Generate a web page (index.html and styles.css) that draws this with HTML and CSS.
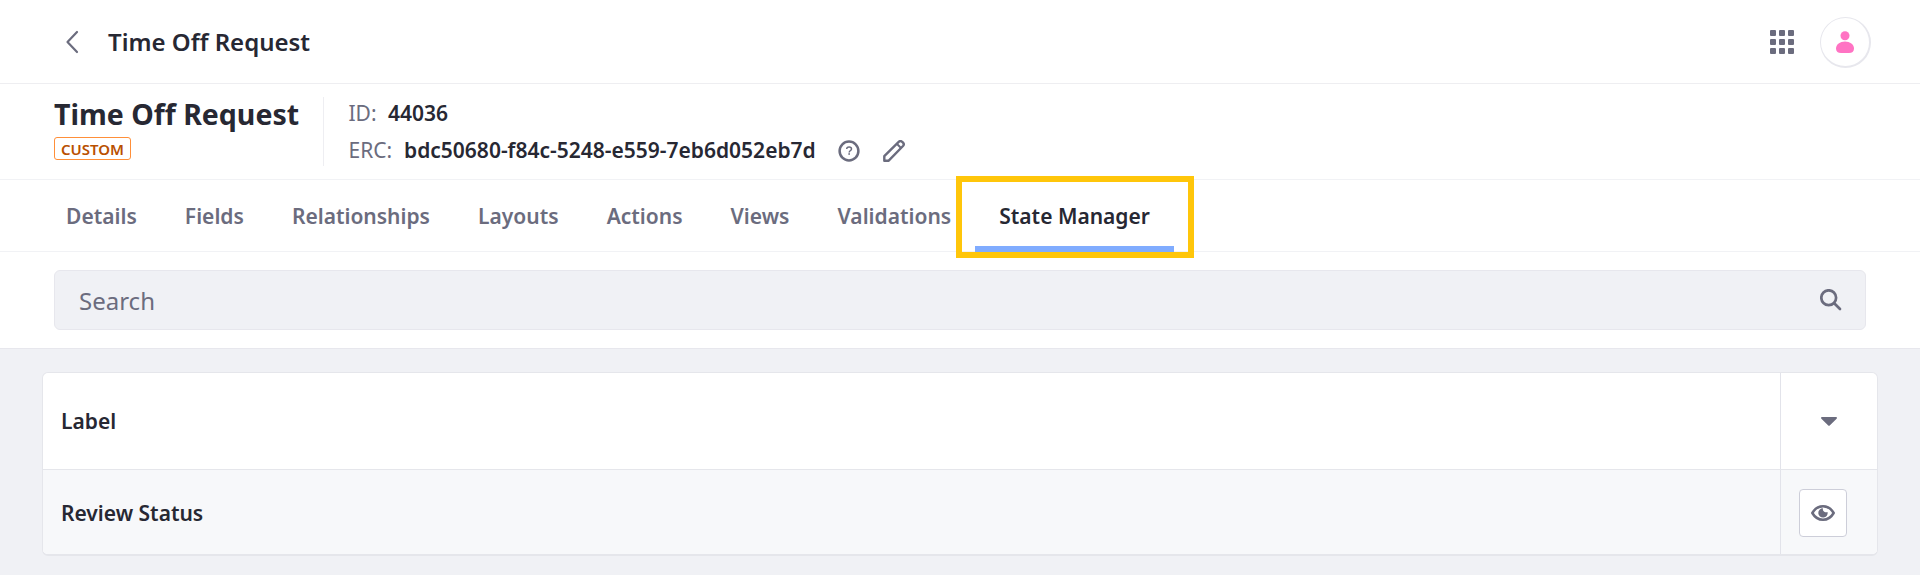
FILE: index.html
```html
<!DOCTYPE html>
<html lang="en">
<head>
<meta charset="utf-8">
<title>Time Off Request</title>
<link rel="stylesheet" href="styles.css">
</head>
<body>
<header class="control-bar">
  <svg class="back" width="14" height="24" viewBox="0 0 14 24"><path d="M12 2 2.500 12 12 22" fill="none" stroke="currentColor" stroke-width="2.200" stroke-linecap="round" stroke-linejoin="round"/></svg>
  <span class="bar-title">Time Off Request</span>
  <svg class="apps" width="24" height="24" viewBox="0 0 24 24" fill="currentColor"><rect width="6" height="6" rx="1"/><rect x="9" width="6" height="6" rx="1"/><rect x="18" width="6" height="6" rx="1"/><rect y="9" width="6" height="6" rx="1"/><rect x="9" y="9" width="6" height="6" rx="1"/><rect x="18" y="9" width="6" height="6" rx="1"/><rect y="18" width="6" height="6" rx="1"/><rect x="9" y="18" width="6" height="6" rx="1"/><rect x="18" y="18" width="6" height="6" rx="1"/></svg>
  <span class="avatar"><svg width="18" height="22" viewBox="0 0 18 22" fill="#ff73c3"><circle cx="9" cy="4.700" r="4.500"/><path d="M9 10.500c5 0 9 3 9 7 0 3-2 4.500-5 4.500H5c-3 0-5-1.500-5-4.500 0-4 4-7 9-7z"/></svg></span>
</header>
<section class="object-bar">
  <div class="identity">
    <h1 class="object-title">Time Off Request</h1>
    <span class="badge">CUSTOM</span>
  </div>
  <div class="meta">
    <div class="meta-row"><span class="key">ID:</span><b class="value">44036</b></div>
    <div class="meta-row"><span class="key erc-key">ERC:</span><b class="value erc">bdc50680-f84c-5248-e559-7eb6d052eb7d</b>
      <svg class="help" width="22" height="22" viewBox="0 0 22 22" fill="none" stroke="currentColor"><circle cx="11" cy="11" r="9.400" stroke-width="2.500"/><path d="M8.700 9.100c0-3 4.800-2.800 4.800-.2 0 1.700-2.300 1.500-2.300 3.700" stroke-width="1.500"/><path d="M10.300 14h1.700" stroke-width="1.600"/></svg>
      <svg class="pencil" width="22" height="22" viewBox="0 0 22 22" fill="none" stroke="currentColor" stroke-width="2.400" stroke-linejoin="round"><path d="M1.300 20.700v-4.600L15.700 1.900c1.200-1 2.500-1 3.500 0l.8.800c1 1 1 2.200 0 3.300L5.700 20.700z"/><path d="m14 4 4 4" stroke-width="2"/></svg>
    </div>
  </div>
</section>
<nav class="tabs">
  <a class="tab"><span>Details</span></a>
  <a class="tab"><span>Fields</span></a>
  <a class="tab"><span>Relationships</span></a>
  <a class="tab"><span>Layouts</span></a>
  <a class="tab"><span>Actions</span></a>
  <a class="tab"><span>Views</span></a>
  <a class="tab"><span>Validations</span></a>
  <a class="tab active"><span>State Manager</span></a>
</nav>
<section class="search-bar">
  <div class="search"><span class="placeholder">Search</span>
    <svg width="22" height="22" viewBox="0 0 22 22" fill="none" stroke="currentColor"><circle cx="8.700" cy="8.700" r="7.400" stroke-width="2.700"/><path d="m14.200 14.200 5.800 5.800" stroke-width="2.700" stroke-linecap="round"/></svg>
  </div>
</section>
<main class="content">
  <div class="table">
    <div class="row head"><div class="cell">Label</div><div class="cell action"><svg width="16" height="9" viewBox="0 0 16 9" fill="currentColor"><path d="M1 0h14c1 0 1.300 1 .6 1.700L9 8.300c-.7.700-1.300.7-2 0L.4 1.700C-.3 1 0 0 1 0z"/></svg></div></div>
    <div class="row body"><div class="cell">Review Status</div><div class="cell action"><span class="view"><svg width="24" height="16" viewBox="0 0 24 16"><path d="M1.300 8C6.500-1 17.500-1 22.700 8 17.500 17 6.500 17 1.300 8z" fill="none" stroke="currentColor" stroke-width="2.500" stroke-linejoin="round"/><path d="M12 3.200c-.8 2.600 1.700 4.700 4.600 3.800A4.700 4.700 0 1 1 12 3.200z" fill="currentColor"/></svg></span></div></div>
  </div>
</main>
</body>
</html>
```
FILE: styles.css
```css
*, *::before, *::after { box-sizing: border-box; }
body { margin: 0; height: 575px; overflow: hidden; background: #f0f1f5; color: #272833; font-family: "Noto Sans", sans-serif; font-size: 21px; font-weight: 600; }
svg { display: block; flex: none; }
span, b, h1 { white-space: nowrap; }
.control-bar { display: flex; align-items: center; height: 84px; padding: 1px 49px 0 65px; background: #fff; border-bottom: 1px solid #eeeef1; color: #6b6c7e; }
.bar-title { margin-left: 29px; color: #272833; font-size: 24px; line-height: 32px; }
.apps { margin-left: auto; }
.avatar { display: flex; align-items: center; justify-content: center; width: 51px; height: 51px; margin-left: 26px; border: 1px solid #e7e7ed; border-right-width: 2px; border-bottom-width: 2px; border-radius: 50%; }
.object-bar { display: flex; height: 96px; background: #fff; border-bottom: 1px solid #f1f2f5; padding: 13px 54px; }
.identity { width: 270px; height: 69px; border-right: 1px solid #eeeef2; }
.object-title { margin: 0; font-size: 28.5px; line-height: 35px; font-weight: 700; }
.badge { display: flex; align-items: center; justify-content: center; width: 77px; height: 23px; margin-top: 5px; border: 1px solid #ff8f39; border-radius: 3px; color: #b95000; font-size: 15px; line-height: 20px; }
.meta { padding-left: 24.5px; }
.meta-row { display: flex; align-items: center; height: 37px; color: #6b6c7e; }
.meta-row:first-child { margin-top: -3px; }
.key { font-weight: 400; width: 39.5px; }
.erc-key { width: 55.5px; }
.value { color: #272833; font-weight: 600; }
.erc { width: 411px; }
.help { margin: 2px 0 0 23px; }
.pencil { margin: 2px 0 0 23px; }
.tabs { display: flex; height: 72px; padding-left: 42px; background: #fff; border-bottom: 1px solid #f1f2f5; color: #6b6c7e; }
.tab { position: relative; display: flex; height: 72px; padding: 0 24.05px 1px; align-items: center; }
.active { color: #272833; }
.active::before { content: ""; position: absolute; left: 0; right: 0; bottom: 0; height: 6px; background: #80acff; }
.active::after { content: ""; position: absolute; left: -19px; top: -4px; width: 238px; height: 82px; border: 6px solid #ffc60a; }
.search-bar { height: 97px; padding: 18px 54px; background: #fff; border-bottom: 1px solid #e7e7ed; }
.search { display: flex; align-items: center; justify-content: space-between; height: 60px; padding: 0 23px 0 24px; border: 1px solid #e7e7ed; border-radius: 6px; background: #f0f1f5; color: #6b6c7e; font-weight: 400; font-size: 24px; }
.content { padding: 23px 42px 0; }
.table { height: 184px; overflow: hidden; border: 1px solid #e5e6eb; border-bottom-width: 2px; border-radius: 6px; background: #fff; }
.row { display: grid; grid-template-columns: 1fr 97px; height: 97px; border-bottom: 1px solid #e5e6eb; }
.body { height: 85px; background: #f7f8fa; border: 0; }
.cell { display: flex; align-items: center; padding-left: 18px; }
.action { justify-content: center; padding: 0; border-left: 1px solid #e2e3ea; color: #6b6c7e; }
.body .action { padding-right: 12px; }
.view { display: flex; align-items: center; justify-content: center; width: 48px; height: 48px; border: 1px solid #cdced9; border-radius: 4px; background: #fff; }
```
